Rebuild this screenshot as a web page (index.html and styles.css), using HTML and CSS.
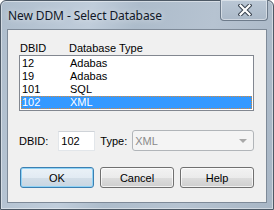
FILE: index.html
```html
<!DOCTYPE html>
<html>
<head>
<meta charset="utf-8">
<link rel="stylesheet" href="styles.css">
</head>
<body>
<div class="window">
  <div class="titlebar">
    <span class="title">New DDM - Select Database</span>
    <div class="close">
      <svg width="14" height="12" viewBox="0 0 14 12">
        <path d="M2.5 1.5 L11.5 10.5 M11.5 1.5 L2.5 10.5" stroke="#3a4450" stroke-width="4.2" stroke-linecap="square" fill="none"/>
        <path d="M2.5 1.5 L11.5 10.5 M11.5 1.5 L2.5 10.5" stroke="#ffffff" stroke-width="2.2" stroke-linecap="square" fill="none"/>
      </svg>
    </div>
  </div>
  <div class="client">
    <div class="header">
      <span class="col1">DBID</span><span class="col2">Database Type</span>
    </div>
    <div class="listbox">
      <div class="row"><span class="col1">12</span><span class="col2">Adabas</span></div>
      <div class="row"><span class="col1">19</span><span class="col2">Adabas</span></div>
      <div class="row"><span class="col1">101</span><span class="col2">SQL</span></div>
      <div class="row selected"><span class="col1">102</span><span class="col2">XML</span></div>
    </div>
    <div class="fields">
      <span class="label">DBID:</span>
      <div class="textbox">102</div>
      <span class="label type">Type:</span>
      <div class="combo"><span>XML</span><span class="arrow"></span></div>
    </div>
    <div class="buttons">
      <div class="btn default">OK</div>
      <div class="btn">Cancel</div>
      <div class="btn">Help</div>
    </div>
  </div>
</div>
</body>
</html>
```
FILE: styles.css
```css
* { box-sizing: border-box; }
html, body { margin: 0; padding: 0; }
body { width: 274px; height: 210px; overflow: hidden; background: #fff; font-family: "Liberation Sans", Arial, sans-serif; font-size: 11px; }
.window {
  width: 274px; height: 210px;
  border: 1px solid #4d5966;
  border-radius: 6px 6px 0 0;
  background: linear-gradient(100deg, #aebdcc 0%, #c0cddb 30%, #adbccb 45%, #b6c3d1 70%, #a8b6c5 100%);
  padding: 0 6px 6px 6px;
  display: flex; flex-direction: column;
  box-shadow: inset 0 0 0 1px rgba(255,255,255,0.45);
}
.titlebar {
  height: 28px; display: flex; align-items: flex-start; position: relative;
}
.title {
  font-family: "Noto Sans", "Open Sans", sans-serif; font-size: 12px; color: #111827;
  margin-top: 6px; margin-left: 1px; letter-spacing: -0.1px;
  text-shadow: 0 0 6px rgba(255,255,255,0.7);
}
.close {
  position: absolute; right: -1px; top: -1px;
  width: 48px; height: 21px;
  border: 1px solid #6d7b8b; border-top: none;
  border-radius: 0 0 4px 4px;
  box-shadow: inset 0 0 0 1px rgba(255,255,255,0.45);
  background: linear-gradient(#bac7d5, #abb9c8);
  display: flex; align-items: center; justify-content: center;
}
.close svg { display: block; margin-left: 2px; }
.client {
  flex: 1;
  border: 1px solid #7e8a98;
  background: #f0f0f0;
  padding: 11px 12px 0 11px;
  display: flex; flex-direction: column;
  color: #000;
}
.header { height: 14px; line-height: 14px; display: flex; padding-left: 1px; }
.col1 { width: 49px; }
.listbox {
  height: 56px;
  border: 1px solid #828790;
  background: #fff;
  padding: 1px 0 0 1px;
  display: flex; flex-direction: column;
}
.row { height: 13px; line-height: 13px; display: flex; padding-left: 1px; }
.row .col1 { width: 48px; }
.row.selected {
  background: #3399ff; color: #fff;
  outline: 1px dotted #d6893a; outline-offset: -1px;
  margin-right: 1px;
}
.fields { margin-top: 19px; height: 21px; display: flex; align-items: center; }
.textbox {
  margin-left: 10px; width: 37px; height: 20px;
  background: #fff; border: 1px solid #e2e6ea; border-top-color: #cfd3d8;
  padding-left: 2px; line-height: 18px;
}
.label.type { margin-left: 5px; }
.combo {
  margin-left: 5px; flex: 1; height: 21px;
  border: 1px solid #b1b5b9; border-radius: 3px;
  background: #f4f4f4; color: #8a8a8a;
  display: flex; align-items: center; justify-content: space-between;
  padding: 0 6px 0 2px;
}
.arrow {
  width: 0; height: 0;
  border-left: 4px solid transparent; border-right: 4px solid transparent;
  border-top: 4px solid #a8a8a8;
}
.buttons { margin-top: 16px; display: flex; gap: 6px; padding-left: 1px; }
.btn {
  width: 74px; height: 21px;
  border: 1px solid #707070; border-radius: 3px;
  background: linear-gradient(#f2f2f2 0%, #ebebeb 50%, #dddddd 51%, #cfcfcf 100%);
  box-shadow: inset 0 0 0 1px rgba(255,255,255,0.7);
  display: flex; align-items: center; justify-content: center;
  font-size: 11px;
}
.btn.default {
  border-color: #3c7fb1;
  background: linear-gradient(#eaf1f7 0%, #e2ebf3 50%, #d3dee8 51%, #c8d6e2 100%);
  box-shadow: inset 0 0 0 1px #8fd3f6;
}
```
